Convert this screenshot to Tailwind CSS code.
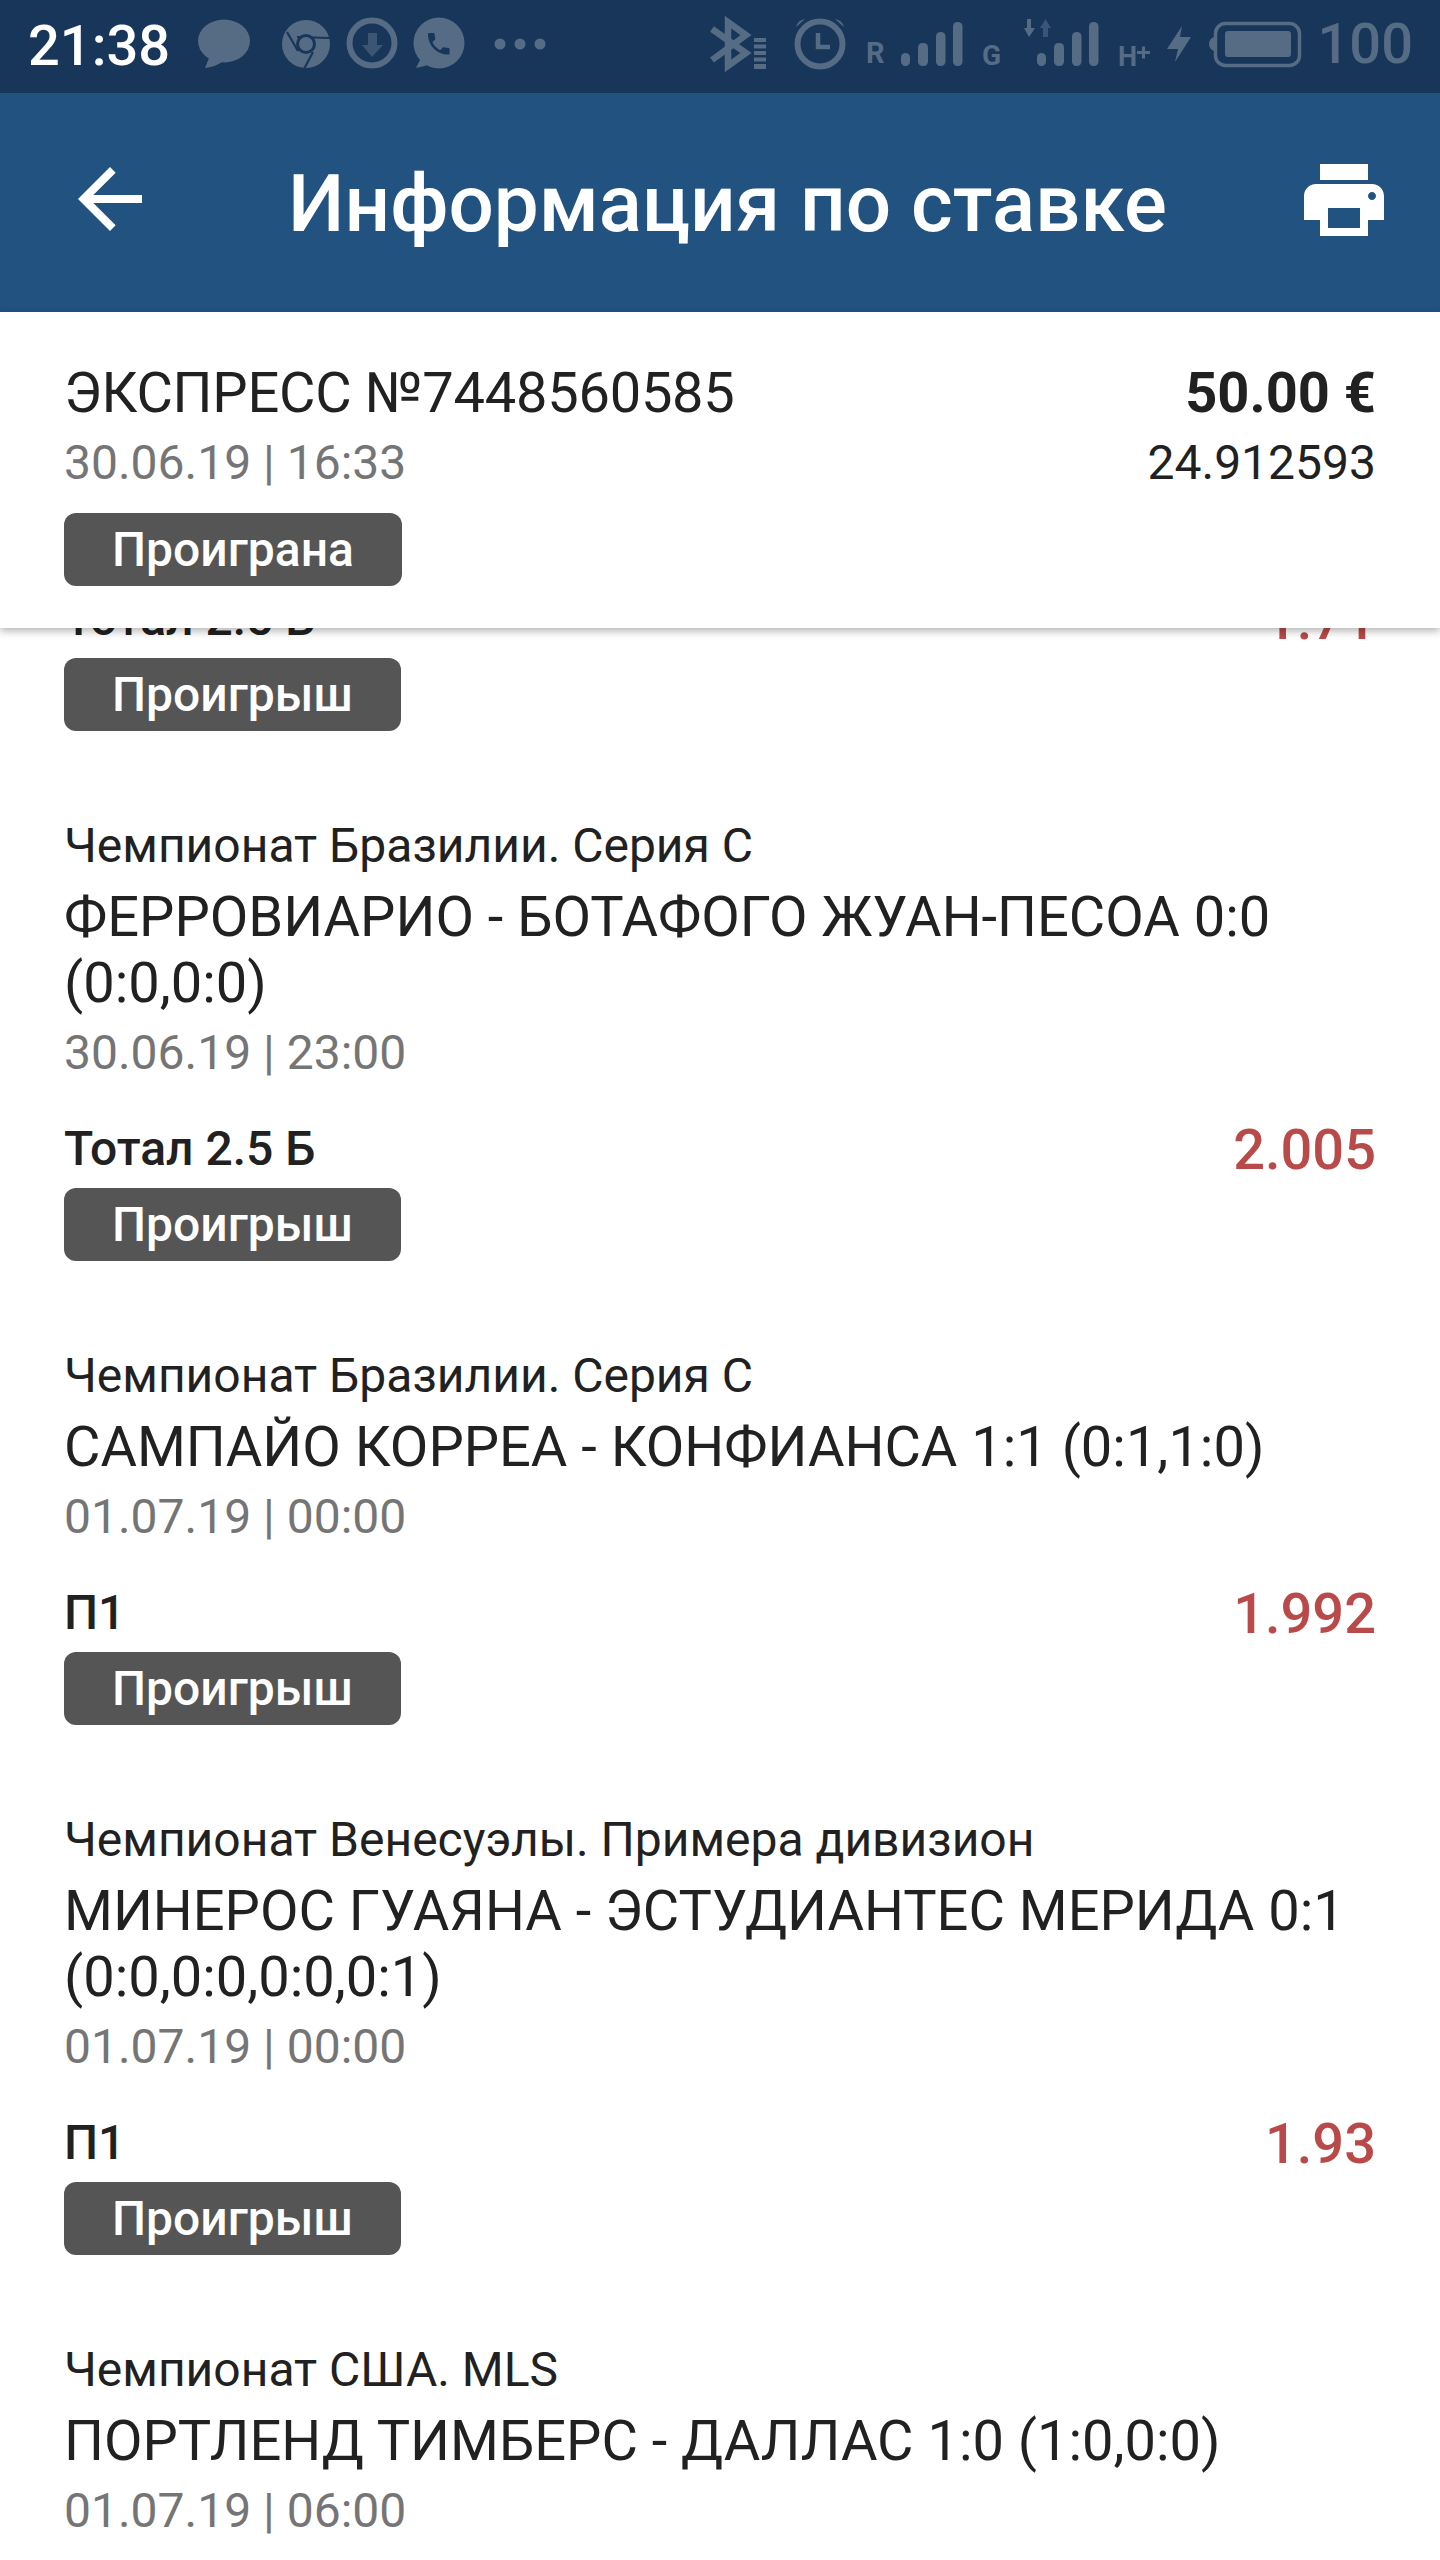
<!DOCTYPE html>
<html lang="en">
<head>
  <meta charset="UTF-8" />
  <meta name="viewport" content="width=device-width, initial-scale=1.0" />
  <title>Информация по ставке</title>
  <script src="https://cdn.jsdelivr.net/npm/@tailwindcss/browser@4"></script>
</head>
<body class="bg-white font-['Roboto',sans-serif] text-[#212121]">
<div class="w-[1440px] h-[2560px] overflow-hidden">

  <!-- status bar -->
  <div class="h-[93px] bg-[#17365a] flex justify-between">
    <div class="flex">
      <span class="ml-[28px] text-white text-[56px] leading-[93px] font-medium">21:38</span>
      <svg class="ml-[26px]" width="352" height="93" viewBox="196 0 352 93" fill="#566c85">
        <ellipse cx="224" cy="41" rx="26" ry="21.5" />
        <path d="M209 58 L205 68 Q215 67 222 62z" />
        <circle cx="306" cy="44" r="24" />
        <g stroke="#17365a" stroke-width="2.2" fill="none">
          <path d="M297 37 L330 38" />
          <path d="M287 32 L298 51" />
          <path d="M313 52 L304 69" />
          <circle cx="306" cy="44" r="8.5" fill="#566c85" stroke-width="3" />
        </g>
        <circle cx="372" cy="43" r="22.5" fill="none" stroke="#566c85" stroke-width="6" />
        <path d="M368 33 H377 V45 H383 L372 57 L362 45 H368z" fill="#3a5674" />
        <circle cx="439" cy="43" r="25.5" />
        <path d="M420 60 L416 68 Q424 67 432 63z" />
        <path fill="#17365a" transform="translate(424.4 29.4) scale(1.2)" d="M6.62 10.79c1.44 2.83 3.76 5.14 6.59 6.59l2.2-2.2c.27-.27.67-.36 1.02-.24 1.12.37 2.33.57 3.57.57.55 0 1 .45 1 1V20c0 .55-.45 1-1 1-9.39 0-17-7.61-17-17 0-.55.45-1 1-1h3.5c.55 0 1 .45 1 1 0 1.25.2 2.45.57 3.57.11.35.03.74-.25 1.02l-2.2 2.2z" />
        <circle cx="500" cy="44" r="5.5" />
        <circle cx="520" cy="44" r="5.5" />
        <circle cx="540" cy="44" r="5.5" />
      </svg>
    </div>
    <div class="flex">
      <svg width="600" height="93" viewBox="706 0 600 93" fill="#566c85">
        <path d="M712 29 L746 53 L728 66 V22 L746 35 L712 60" fill="none" stroke="#566c85" stroke-width="6.5" />
        <rect x="754" y="38" width="12" height="4" />
        <rect x="754" y="44.5" width="12" height="4" />
        <rect x="754" y="51" width="12" height="4" />
        <rect x="754" y="57.5" width="12" height="4" />
        <rect x="754" y="64" width="12" height="5" />
        <circle cx="820" cy="44" r="22.5" fill="none" stroke="#566c85" stroke-width="6" />
        <path d="M818 33 V47 H830" fill="none" stroke="#566c85" stroke-width="4.5" />
        <path d="M796 27 Q798 20 805 19z M844 27 Q842 20 835 19z" />
        <text x="866" y="63" font-size="29" font-weight="700" font-family="Roboto">R</text>
        <rect x="901" y="53" width="9" height="13" rx="4.5" />
        <rect x="918" y="43" width="10" height="23" rx="4.5" />
        <rect x="936" y="32" width="9.5" height="34" rx="4.5" />
        <rect x="953" y="22" width="9.5" height="44" rx="4.5" />
        <text x="982" y="65" font-size="28" font-weight="700" font-family="Roboto">G</text>
        <path d="M1027 19 H1031 V28 H1035 L1029 37 L1024 28 H1027z" />
        <path d="M1043 37 H1048 V28 H1051 L1045.5 19 L1040 28 H1043z" fill="#3a5674" />
        <rect x="1037" y="53" width="9" height="13" rx="4.5" />
        <rect x="1054" y="43" width="10" height="23" rx="4.5" />
        <rect x="1072" y="32" width="9.5" height="34" rx="4.5" />
        <rect x="1089" y="22" width="9.5" height="44" rx="4.5" />
        <text x="1118" y="66" font-size="27" font-weight="700" font-family="Roboto">H</text>
        <path d="M1137 51 H1142 V46.5 H1145 V51 H1150 V54 H1145 V58.5 H1142 V54 H1137z" />
        <path d="M1182 26 L1167 49 H1178 L1175 62 L1191 37 H1180z" />
        <rect x="1215.5" y="23.5" width="84" height="42" rx="10" fill="none" stroke="#566c85" stroke-width="3.5" />
        <path d="M1214 37 Q1209 39 1209 44 Q1209 49 1214 51z" />
        <rect x="1225" y="31" width="66" height="26" rx="3" />
      </svg>
      <span class="ml-[12px] mr-[27px] text-[#566c85] text-[56px] leading-[89px] font-medium">100</span>
    </div>
  </div>

  <!-- toolbar -->
  <div class="h-[219px] bg-[#225280] flex items-center pb-[7px] pl-[62px] pr-[48px] text-white">
    <svg width="96" height="96" viewBox="0 0 24 24" fill="#fff"><path d="M20 11H7.83l5.59-5.59L12 4l-8 8 8 8 1.41-1.41L7.83 13H20v-2z" /></svg>
    <h1 class="ml-[130px] mt-[10px] text-[80px] leading-[96px] font-medium whitespace-nowrap">Информация по ставке</h1>
    <svg class="ml-auto mt-[2px]" width="96" height="96" viewBox="0 0 24 24" fill="#fff"><path d="M19 8H5c-1.66 0-3 1.34-3 3v6h4v4h12v-4h4v-6c0-1.66-1.34-3-3-3zm-3 11H8v-5h8v5zm3-7c-.55 0-1-.45-1-1s.45-1 1-1 1 .45 1 1-.45 1-1 1zm-1-9H6v4h12V3z" /></svg>
  </div>

  <!-- bet summary, sits over the scrolled list -->
  <div class="relative z-10 h-[316px] bg-white px-[64px] pt-[48px] flex justify-between shadow-[0_3px_8px_rgba(0,0,0,0.3)]">
    <div>
      <div class="text-[56px] leading-[66px] tracking-[-0.25px]">ЭКСПРЕСС №7448560585</div>
      <div class="mt-[9px] text-[48px] leading-[56px] text-[#757575]">30.06.19 | 16:33</div>
      <span class="mt-[22px] block w-fit h-[73px] px-[48px] rounded-[12px] bg-[#555555] text-white text-[48px] leading-[73px] font-medium">Проиграна</span>
    </div>
    <div class="text-right">
      <div class="text-[56px] leading-[66px] font-bold">50.00 €</div>
      <div class="mt-[9px] text-[48px] leading-[56px]">24.912593</div>
    </div>
  </div>

  <!-- events -->
  <div class="-mt-[37px] px-[64px]">
    <div class="pb-[87px]">
      <div class="flex justify-between items-center h-[56px]">
        <span class="text-[48px] leading-[56px] font-medium">Тотал 2.5 Б</span>
        <span class="pt-[2px] text-[56px] leading-[56px] font-medium text-[#b94a4a]">1.71</span>
      </div>
      <span class="mt-[11px] block w-fit h-[73px] px-[48px] rounded-[12px] bg-[#555555] text-white text-[48px] leading-[73px] font-medium">Проигрыш</span>
    </div>

    <div class="pb-[87px]">
      <div class="text-[48px] leading-[56px]">Чемпионат Бразилии. Серия С</div>
      <div class="mt-[10px] text-[56px] leading-[66px]">ФЕРРОВИАРИО - БОТАФОГО ЖУАН-ПЕСОА 0:0 (0:0,0:0)</div>
      <div class="mt-[9px] text-[48px] leading-[56px] text-[#757575]">30.06.19 | 23:00</div>
      <div class="mt-[40px] flex justify-between items-center h-[56px]">
        <span class="text-[48px] leading-[56px] font-medium">Тотал 2.5 Б</span>
        <span class="pt-[2px] text-[56px] leading-[56px] font-medium text-[#b94a4a]">2.005</span>
      </div>
      <span class="mt-[11px] block w-fit h-[73px] px-[48px] rounded-[12px] bg-[#555555] text-white text-[48px] leading-[73px] font-medium">Проигрыш</span>
    </div>

    <div class="pb-[87px]">
      <div class="text-[48px] leading-[56px]">Чемпионат Бразилии. Серия С</div>
      <div class="mt-[10px] text-[56px] leading-[66px]">САМПАЙО КОРРЕА - КОНФИАНСА 1:1 (0:1,1:0)</div>
      <div class="mt-[9px] text-[48px] leading-[56px] text-[#757575]">01.07.19 | 00:00</div>
      <div class="mt-[40px] flex justify-between items-center h-[56px]">
        <span class="text-[48px] leading-[56px] font-medium">П1</span>
        <span class="pt-[2px] text-[56px] leading-[56px] font-medium text-[#b94a4a]">1.992</span>
      </div>
      <span class="mt-[11px] block w-fit h-[73px] px-[48px] rounded-[12px] bg-[#555555] text-white text-[48px] leading-[73px] font-medium">Проигрыш</span>
    </div>

    <div class="pb-[87px]">
      <div class="text-[48px] leading-[56px]">Чемпионат Венесуэлы. Примера дивизион</div>
      <div class="mt-[10px] text-[56px] leading-[66px]">МИНЕРОС ГУАЯНА - ЭСТУДИАНТЕС МЕРИДА 0:1 (0:0,0:0,0:0,0:1)</div>
      <div class="mt-[9px] text-[48px] leading-[56px] text-[#757575]">01.07.19 | 00:00</div>
      <div class="mt-[40px] flex justify-between items-center h-[56px]">
        <span class="text-[48px] leading-[56px] font-medium">П1</span>
        <span class="pt-[2px] text-[56px] leading-[56px] font-medium text-[#b94a4a]">1.93</span>
      </div>
      <span class="mt-[11px] block w-fit h-[73px] px-[48px] rounded-[12px] bg-[#555555] text-white text-[48px] leading-[73px] font-medium">Проигрыш</span>
    </div>

    <div>
      <div class="text-[48px] leading-[56px]">Чемпионат США. MLS</div>
      <div class="mt-[10px] text-[56px] leading-[66px]">ПОРТЛЕНД ТИМБЕРС - ДАЛЛАС 1:0 (1:0,0:0)</div>
      <div class="mt-[9px] text-[48px] leading-[56px] text-[#757575]">01.07.19 | 06:00</div>
    </div>
  </div>
</div>
</body>
</html>
